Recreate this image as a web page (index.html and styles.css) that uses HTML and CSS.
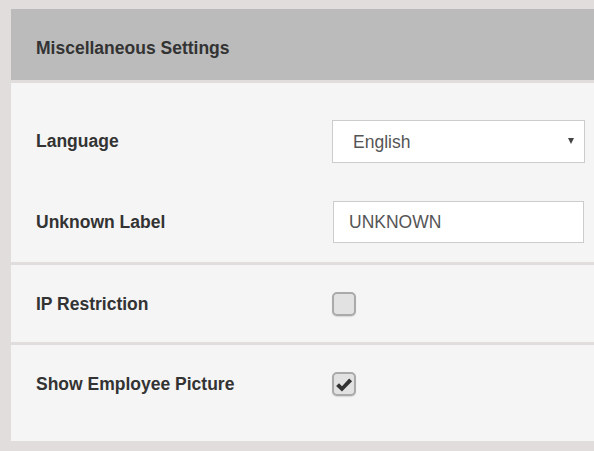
FILE: index.html
```html
<!DOCTYPE html>
<html>
<head>
<meta charset="utf-8">
<link rel="stylesheet" href="styles.css">
</head>
<body>
<div class="panel">
  <div class="panel-header">Miscellaneous Settings</div>
  <div class="section section-first">
    <div class="row">
      <label class="label">Language</label>
      <div class="select-wrap">
        <select class="select"><option>English</option></select>
        <span class="caret"></span>
      </div>
    </div>
    <div class="row row-gap">
      <label class="label">Unknown Label</label>
      <input class="text-input" type="text" value="UNKNOWN">
    </div>
  </div>
  <div class="section section-ip">
    <div class="row">
      <label class="label">IP Restriction</label>
      <span class="check"></span>
    </div>
  </div>
  <div class="section section-pic">
    <div class="row">
      <label class="label">Show Employee Picture</label>
      <span class="check">
        <svg class="tick" viewBox="0 0 16 16" width="18" height="18"><path d="M1 8.8 L3.6 6.4 L6.2 9 L12.6 2.2 L15.2 4.6 L6.2 13.8 Z" fill="#333"/></svg>
      </span>
    </div>
  </div>
</div>
</body>
</html>
```
FILE: styles.css
```css
html, body {
  margin: 0;
  padding: 0;
}
body {
  background: #e1dddd;
  font-family: "Liberation Sans", Arial, sans-serif;
  color: #333;
  height: 451px;
  overflow: hidden;
}
.panel {
  margin: 9px 0 0 11px;
  display: flex;
  flex-direction: column;
  gap: 3px;
}
.panel-header {
  background: #bbbbbb;
  height: 71px;
  display: flex;
  align-items: center;
  padding-left: 25px;
  padding-top: 7px;
  font-size: 17.5px;
  font-weight: bold;
  color: #333;
  box-sizing: border-box;
}
.section {
  background: #f5f5f5;
  padding-left: 25px;
  padding-right: 9px;
}
.section-first {
  padding-top: 37px;
  padding-bottom: 19px;
}
.section-ip {
  padding-top: 27px;
  padding-bottom: 26px;
}
.section-pic {
  padding-top: 27px;
  padding-bottom: 45px;
}
.row {
  display: grid;
  grid-template-columns: 296px 1fr;
  align-items: center;
}
.row-gap {
  margin-top: 38px;
}
.label {
  font-size: 17.5px;
  font-weight: bold;
  color: #333;
}
.select-wrap {
  position: relative;
  height: 43px;
}
.select {
  appearance: none;
  -webkit-appearance: none;
  width: 100%;
  height: 43px;
  box-sizing: border-box;
  border: 1px solid #cccccc;
  background: #fff;
  border-radius: 0;
  font-family: "Liberation Sans", Arial, sans-serif;
  font-size: 17.5px;
  color: #555;
  padding: 0 0 0 20px;
  margin: 0;
  outline: none;
}
.caret {
  position: absolute;
  right: 11px;
  top: 18px;
  width: 0;
  height: 0;
  border-left: 3px solid transparent;
  border-right: 3px solid transparent;
  border-top: 6px solid #444;
}
.text-input {
  width: 251px;
  height: 42px;
  box-sizing: border-box;
  margin-left: 1px;
  border: 1px solid #cccccc;
  background: #fff;
  font-family: "Liberation Sans", Arial, sans-serif;
  font-size: 17.5px;
  color: #555;
  padding: 0 0 0 15px;
  outline: none;
}
.check {
  width: 24px;
  height: 24px;
  box-sizing: border-box;
  border: 2px solid #aaaaaa;
  border-radius: 5px;
  background: #e2e2e2;
  box-shadow: 0 1px 1px rgba(0,0,0,0.12);
  display: flex;
  align-items: center;
  justify-content: center;
}
.tick {
  display: block;
  margin-top: 1px;
  flex: none;
}
```
